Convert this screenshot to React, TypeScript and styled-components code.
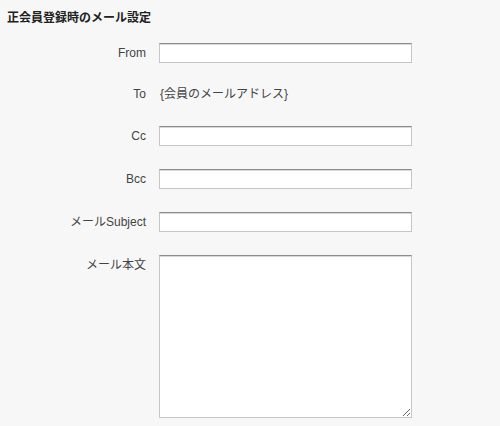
import React from "react";
import styled, { createGlobalStyle } from "styled-components";

const GlobalStyle = createGlobalStyle`
  html, body {
    margin: 0;
    background: #f7f7f7;
  }
  body {
    font-family: "Liberation Sans", Arial, "Noto Sans CJK JP", sans-serif;
    font-size: 12px;
    color: #333;
  }
`;

const Page = styled.div`
  padding: 8px 0 0 7px;
`;

const Title = styled.h2`
  margin: 0;
  font-size: 12px;
  line-height: 20px;
  font-weight: bold;
  color: #222;
`;

const Form = styled.div`
  margin-top: 15px;
  display: grid;
  grid-template-columns: 139px 253px;
  column-gap: 13px;
  row-gap: 23px;
  align-items: start;
`;

const Label = styled.label<{ $compact?: boolean }>`
  text-align: right;
  line-height: ${({ $compact }) => ($compact ? "17px" : "20px")};
  color: #444;
  white-space: nowrap;
`;

const Value = styled.div`
  line-height: 17px;
  height: 17px;
  padding-left: 1px;
  color: #444;
`;

const Field = styled.input`
  display: block;
  box-sizing: border-box;
  width: 253px;
  height: 20px;
  margin: 0;
  padding: 0 3px;
  background: #fff;
  border: 1px solid #c6c6c6;
  border-top-color: #8c8c8c;
  box-shadow: inset 0 1px 0 #d8d8d8;
  font: inherit;
  outline: none;
`;

const Body = styled.textarea`
  display: block;
  box-sizing: border-box;
  width: 253px;
  height: 163px;
  margin: 0;
  padding: 2px 3px;
  background: #fff;
  border: 1px solid #c6c6c6;
  border-top-color: #8c8c8c;
  box-shadow: inset 0 1px 0 #d8d8d8;
  font: inherit;
  outline: none;
`;

const rows = [
  { label: "From", kind: "input" },
  { label: "To", kind: "text", value: "{会員のメールアドレス}" },
  { label: "Cc", kind: "input" },
  { label: "Bcc", kind: "input" },
  { label: "メールSubject", kind: "input" },
  { label: "メール本文", kind: "area" },
];

export default function App() {
  return (
    <>
      <GlobalStyle />
      <Page>
        <Title>正会員登録時のメール設定</Title>
        <Form>
          {rows.map((r) => (
            <React.Fragment key={r.label}>
              <Label $compact={r.kind === "text"}>{r.label}</Label>
              {r.kind === "input" && <Field type="text" />}
              {r.kind === "text" && <Value>{r.value}</Value>}
              {r.kind === "area" && <Body />}
            </React.Fragment>
          ))}
        </Form>
      </Page>
    </>
  );
}
